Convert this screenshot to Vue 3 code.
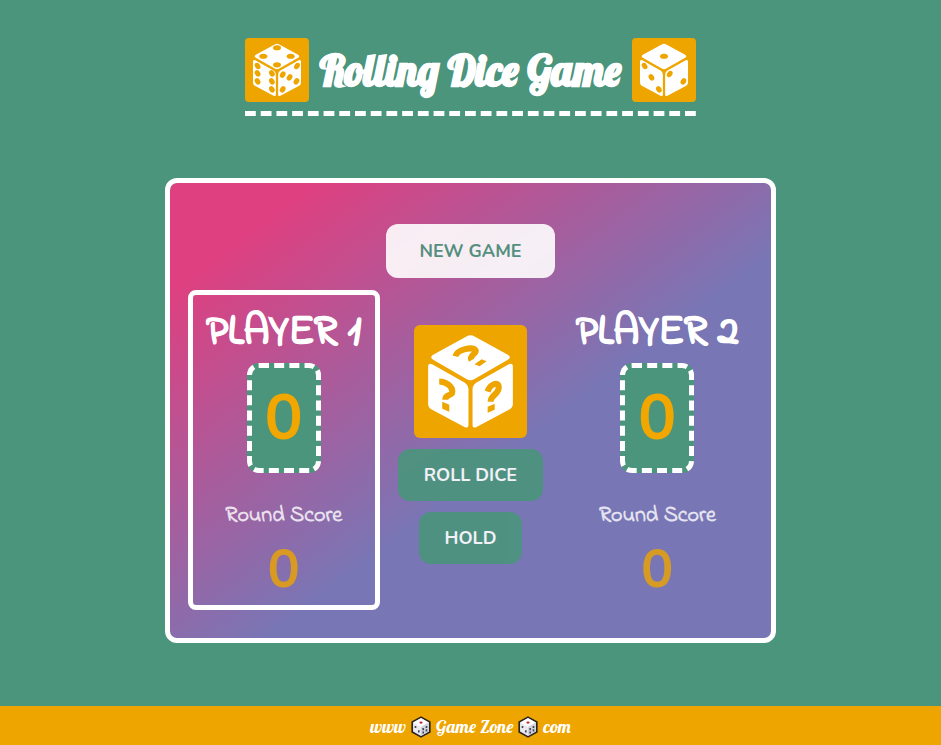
<script setup>
import { ref } from 'vue'

const faces = [
  'M52 11.500Q56 9 60 11.500L93 29.500Q97 32 93 34.500L60 53.500Q56 56 52 53.500L19 34.500Q15 32 19 29.500Z',
  'M14 41Q14 37 18 39L50 57Q54 59.500 54 64V99Q54 103 50 101L18 84Q14 82 14 78Z',
  'M98 41Q98 37 94 39L62 57Q58 59.500 58 64V99Q58 103 62 101L94 84Q98 82 98 78Z',
]

const headerDice = {
  left: {
    top: [[56, 17], [32, 32], [80, 32], [56, 47]],
    front: [[22, 49], [22, 62], [22, 76], [47, 62], [47, 76], [47, 90]],
    side: [[91, 49], [66, 64], [78, 69], [90, 76], [66, 90]],
  },
  right: {
    top: [[56, 32]],
    front: [[22, 49], [34, 69], [47, 90]],
    side: [[66, 63], [90, 76]],
  },
}

const players = ref([
  { name: 'Player 1', score: 0, round: 0 },
  { name: 'Player 2', score: 0, round: 0 },
])
const active = ref(0)

function newGame() {
  players.value.forEach((p) => { p.score = 0; p.round = 0 })
  active.value = 0
}

function rollDice() {
  const value = Math.floor(Math.random() * 6) + 1
  const player = players.value[active.value]
  if (value === 1) {
    player.round = 0
    active.value = 1 - active.value
  } else {
    player.round += value
  }
}

function hold() {
  const player = players.value[active.value]
  player.score += player.round
  player.round = 0
  active.value = 1 - active.value
}
</script>

<template>
  <div class="page">
    <header class="header">
      <div class="brand">
        <template v-for="(die, side) in headerDice" :key="side">
          <svg class="logo" :class="side" viewBox="0 0 112 112" aria-hidden="true">
            <path v-for="d in faces" :key="d" :d="d" fill="#fff" />
            <g fill="#eea500">
              <ellipse v-for="(p, i) in die.top" :key="'t' + i" :cx="p[0]" :cy="p[1]" rx="7" ry="4.500" />
              <ellipse v-for="(p, i) in die.front" :key="'f' + i" :cx="p[0]" :cy="p[1]" rx="4.500" ry="6" :transform="`rotate(-32 ${p[0]} ${p[1]})`" />
              <ellipse v-for="(p, i) in die.side" :key="'s' + i" :cx="p[0]" :cy="p[1]" rx="4.500" ry="6" :transform="`rotate(32 ${p[0]} ${p[1]})`" />
            </g>
          </svg>
        </template>
        <h1>Rolling Dice Game</h1>
      </div>
      <svg class="dashes" viewBox="0 0 459 5" preserveAspectRatio="none" aria-hidden="true">
        <path d="M0 2.500H459" stroke="#fff" stroke-width="5" stroke-dasharray="11 5" />
      </svg>
    </header>

    <main class="board">
      <button class="btn new" type="button" @click="newGame">NEW GAME</button>
      <div class="columns">
        <template v-for="(player, i) in players" :key="player.name">
          <div v-if="i === 1" class="controls">
            <svg class="dice" viewBox="0 0 112 112" role="img" aria-label="Dice">
              <path v-for="d in faces" :key="d" :d="d" fill="#fff" />
              <g fill="none" stroke="#eea500" stroke-width="6">
                <path d="M25 56C32 56 38 61 38 66C38 71 31 68 31 74" />
                <path d="M73 66C75 59 84 55 84 62C84 69 76 69 76 76" />
                <path d="M41 31C43 24 58 21 61 25C63 28 54 30 57 35" />
              </g>
              <path fill="#eea500" d="M28 76L35 79V86L28 83ZM73 81L80 78V84L73 87ZM60 39L67 34L72 36L65 41Z" />
            </svg>
            <button class="btn" type="button" @click="rollDice">ROLL DICE</button>
            <button class="btn" type="button" @click="hold">HOLD</button>
          </div>
          <section class="player" :class="{ active: active === i }">
            <h2>{{ player.name }}</h2>
            <div class="score">{{ player.score }}</div>
            <h3>Round Score</h3>
            <div class="round">{{ player.round }}</div>
          </section>
        </template>
      </div>
    </main>

    <footer class="footer">
      <span>www</span>
      <svg class="mini" viewBox="0 0 20 20" aria-hidden="true">
        <path d="M10 1L18 5.500V14.500L10 19L2 14.500V5.500Z" fill="#e9e9ee" stroke="#2b2320" stroke-width="1.500" stroke-linejoin="round" />
        <path d="M10 2L17 6L10 10L3 6Z" fill="#fff" />
        <path d="M10 10L17 6V14L10 18Z" fill="#d3d3dc" />
        <ellipse cx="10" cy="6" rx="1.500" ry="1" fill="#c8203a" />
        <path d="M5 9V11M8 13V15M12 11V13M15 9V11M12 14V16M15 12V14" stroke="#444a5c" stroke-width="1.500" />
      </svg>
      <span>Game Zone</span>
      <svg class="mini" viewBox="0 0 20 20" aria-hidden="true">
        <path d="M10 1L18 5.500V14.500L10 19L2 14.500V5.500Z" fill="#e9e9ee" stroke="#2b2320" stroke-width="1.500" stroke-linejoin="round" />
        <path d="M10 2L17 6L10 10L3 6Z" fill="#fff" />
        <path d="M10 10L17 6V14L10 18Z" fill="#d3d3dc" />
        <ellipse cx="10" cy="6" rx="1.500" ry="1" fill="#c8203a" />
        <path d="M5 9V11M8 13V15M12 11V13M15 9V11M12 14V16M15 12V14" stroke="#444a5c" stroke-width="1.500" />
      </svg>
      <span>com</span>
    </footer>
  </div>
</template>

<style>
body {
  margin: 0;
  background: #4a957c;
}
</style>

<style scoped>
.page {
  min-height: 100vh;
  display: flex;
  flex-direction: column;
  align-items: center;
  background: #4a957c;
  color: #fff;
  font-family: "Nunito", "Open Sans", sans-serif;
}

.header {
  padding-top: 38px;
}

.brand {
  display: flex;
  align-items: center;
  gap: 11px;
}

.logo {
  flex: none;
  width: 64px;
  height: 64px;
  border-radius: 4px;
  background: #eea500;
}

.logo.right {
  order: 3;
}

h1,
h2,
h3 {
  margin: 0;
}

h1 {
  order: 2;
  padding-top: 2px;
  font: bold 42px/62px "Lobster", "Liberation Serif", serif;
  white-space: nowrap;
  -webkit-text-stroke: 1px currentColor;
}

.dashes {
  display: block;
  width: 0;
  min-width: 100%;
  height: 5px;
  margin-top: 9px;
}

.board {
  box-sizing: border-box;
  width: 65%;
  margin: 62px 0;
  padding: 41px 18px 28px;
  display: flex;
  flex-direction: column;
  align-items: center;
  gap: 12px;
  border: 5px solid #fff;
  border-radius: 12px;
  background: linear-gradient(to bottom right, #de4080 12%, #7976b5 58%) padding-box;
}

.btn {
  padding: 14px 26px;
  border: 0;
  border-radius: 12px;
  background: #4a957c;
  color: #fff;
  font: bold 18px/24px "Nunito", "Lato", sans-serif;
  opacity: 0.9;
  cursor: pointer;
}

.btn.new {
  padding: 15px 33px;
  background: #fff;
  color: #4a957c;
}

.columns {
  align-self: stretch;
  display: grid;
  grid-template-columns: 192px 1fr 192px;
}

.controls {
  display: flex;
  flex-direction: column;
  align-items: center;
  gap: 11px;
  padding-top: 35px;
}

.dice {
  width: 113px;
  height: 113px;
  border-radius: 6px;
  background: #eea500;
}

.player {
  display: flex;
  flex-direction: column;
  align-items: center;
  padding: 13px 0 0;
  border: 5px solid transparent;
  border-radius: 8px;
}

.player.active {
  border-color: #fff;
}

h2 {
  font: bold 42px/50px "Indie Flower", "Lato", sans-serif;
  text-transform: uppercase;
  white-space: nowrap;
  -webkit-text-stroke: 1px currentColor;
}

.score {
  box-sizing: border-box;
  min-width: 74px;
  margin-top: 5px;
  padding: 0 12px;
  border: 5px dashed #fff;
  border-radius: 12px;
  background: #4a957c;
  color: #f2a600;
  font-size: 64px;
  font-weight: 700;
  line-height: 100px;
  text-align: center;
}

h3 {
  margin-top: 27px;
  font: bold 22px/32px "Indie Flower", "Lato", sans-serif;
  opacity: 0.8;
}

.round {
  margin-top: 1px;
  color: #eea500;
  font-size: 54px;
  font-weight: 700;
  line-height: 72px;
  opacity: 0.8;
}

.footer {
  align-self: stretch;
  box-sizing: border-box;
  margin-top: auto;
  padding: 9px 0 6px;
  display: flex;
  justify-content: center;
  align-items: center;
  gap: 4px;
  background: #eea500;
  font: 18px/24px "Lobster", "Liberation Serif", serif;
}

.mini {
  width: 22px;
  height: 22px;
}
</style>
